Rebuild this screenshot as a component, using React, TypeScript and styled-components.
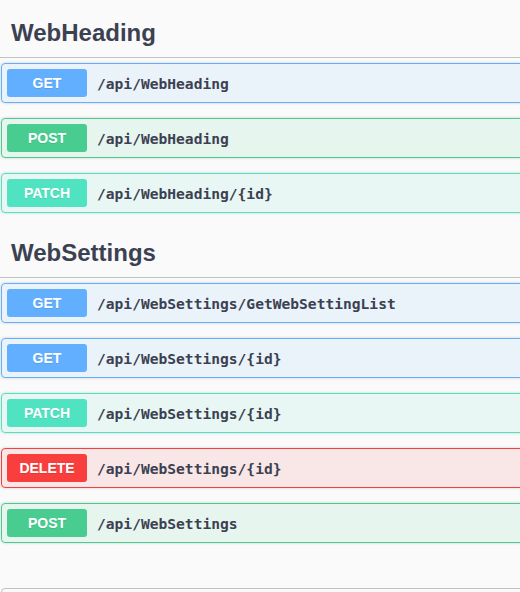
import React from 'react'
import styled, { createGlobalStyle } from 'styled-components'

type Method = 'GET' | 'POST' | 'PATCH' | 'DELETE'

const methodColors: Record<Method, { main: string; bg: string }> = {
	GET: { main: '#61affe', bg: 'rgba(97, 175, 254, 0.1)' },
	POST: { main: '#49cc90', bg: 'rgba(73, 204, 144, 0.1)' },
	PATCH: { main: '#50e3c2', bg: 'rgba(80, 227, 194, 0.1)' },
	DELETE: { main: '#f93e3e', bg: 'rgba(249, 62, 62, 0.1)' },
}

interface IOperation {
	method: Method
	path: string
}

interface ITag {
	name: string
	operations: IOperation[]
}

const tags: ITag[] = [
	{
		name: 'WebHeading',
		operations: [
			{ method: 'GET', path: '/api/WebHeading' },
			{ method: 'POST', path: '/api/WebHeading' },
			{ method: 'PATCH', path: '/api/WebHeading/{id}' },
		],
	},
	{
		name: 'WebSettings',
		operations: [
			{ method: 'GET', path: '/api/WebSettings/GetWebSettingList' },
			{ method: 'GET', path: '/api/WebSettings/{id}' },
			{ method: 'PATCH', path: '/api/WebSettings/{id}' },
			{ method: 'DELETE', path: '/api/WebSettings/{id}' },
			{ method: 'POST', path: '/api/WebSettings' },
		],
	},
]

const App = () => {
	return (
		<>
			<GlobalStyle />
			<Root>
				{tags.map(tag => (
					<TagSection key={tag.name}>
						<TagHeading>{tag.name}</TagHeading>
						<Operations>
							{tag.operations.map((op, i) => (
								<Opblock key={i} $method={op.method}>
									<MethodBadge $method={op.method}>{op.method}</MethodBadge>
									<OpPath>{op.path}</OpPath>
								</Opblock>
							))}
						</Operations>
					</TagSection>
				))}
				<Models />
			</Root>
		</>
	)
}

export default App

const GlobalStyle = createGlobalStyle`
	html, body {
		margin: 0;
		padding: 0;
		background: #fafafa;
		overflow: hidden;
	}
	body {
		font-family: 'Liberation Sans', Arial, sans-serif;
		color: #3b4151;
	}
`

const Root = styled.div`
	width: 580px;
	padding-top: 8px;
`

const TagSection = styled.section`
	display: flex;
	flex-direction: column;
`

const TagHeading = styled.h3`
	margin: 0 0 5px;
	padding: 10px 20px 10px 11px;
	font-size: 24px;
	font-weight: 700;
	line-height: 29px;
	color: #3b4151;
	border-bottom: 1px solid rgba(59, 65, 81, 0.3);
`

const Operations = styled.div`
	display: flex;
	flex-direction: column;
	gap: 15px;
	padding-left: 1px;
	margin-bottom: 15px;
`

const Opblock = styled.div<{ $method: Method }>`
	display: flex;
	align-items: center;
	padding: 5px;
	border: 1px solid ${p => methodColors[p.$method].main};
	border-radius: 4px;
	background: ${p => methodColors[p.$method].bg};
	box-shadow: 0 0 3px rgba(0, 0, 0, 0.19);
`

const MethodBadge = styled.span<{ $method: Method }>`
	display: flex;
	align-items: center;
	justify-content: center;
	box-sizing: border-box;
	width: 80px;
	height: 28px;
	border-radius: 3px;
	background: ${p => methodColors[p.$method].main};
	color: #fff;
	font-size: 14px;
	font-weight: 700;
	text-shadow: 0 1px 0 rgba(0, 0, 0, 0.1);
`

const OpPath = styled.span`
	padding-left: 10px;
	font-family: 'DejaVu Sans Mono', 'Liberation Mono', monospace;
	font-size: 14.6px;
	font-weight: 700;
	color: #3b4151;
`

const Models = styled.section`
	margin: 30px 0 0 1px;
	height: 60px;
	border: 1px solid rgba(59, 65, 81, 0.3);
	border-radius: 4px;
`
